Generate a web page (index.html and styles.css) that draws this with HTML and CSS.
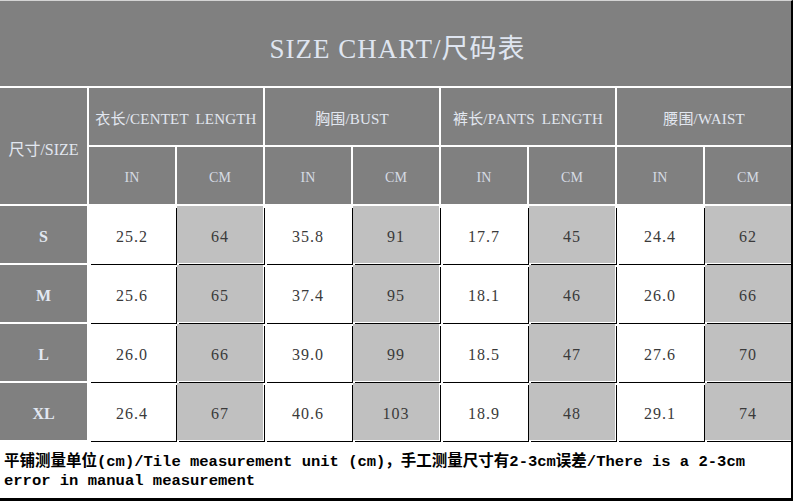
FILE: index.html
```html
<!DOCTYPE html>
<html lang="zh">
<head>
<meta charset="utf-8">
<title>Size Chart</title>
<link rel="stylesheet" href="styles.css">
</head>
<body>
<div class="sheet">
  <div class="title">SIZE CHART/尺码表</div>

  <div class="hd size-hd">尺寸/SIZE</div>
  <div class="hd group">衣长/CENTET LENGTH</div>
  <div class="hd group">胸围/BUST</div>
  <div class="hd group">裤长/PANTS LENGTH</div>
  <div class="hd group">腰围/WAIST</div>

  <div class="hd unit">IN</div><div class="hd unit">CM</div>
  <div class="hd unit">IN</div><div class="hd unit">CM</div>
  <div class="hd unit">IN</div><div class="hd unit">CM</div>
  <div class="hd unit">IN</div><div class="hd unit">CM</div>

  <div class="size">S</div>
  <div class="val in">25.2</div><div class="val cm">64</div>
  <div class="val in">35.8</div><div class="val cm">91</div>
  <div class="val in">17.7</div><div class="val cm">45</div>
  <div class="val in">24.4</div><div class="val cm">62</div>

  <div class="size">M</div>
  <div class="val in">25.6</div><div class="val cm">65</div>
  <div class="val in">37.4</div><div class="val cm">95</div>
  <div class="val in">18.1</div><div class="val cm">46</div>
  <div class="val in">26.0</div><div class="val cm">66</div>

  <div class="size">L</div>
  <div class="val in">26.0</div><div class="val cm">66</div>
  <div class="val in">39.0</div><div class="val cm">99</div>
  <div class="val in">18.5</div><div class="val cm">47</div>
  <div class="val in">27.6</div><div class="val cm">70</div>

  <div class="size">XL</div>
  <div class="val in">26.4</div><div class="val cm">67</div>
  <div class="val in">40.6</div><div class="val cm">103</div>
  <div class="val in">18.9</div><div class="val cm">48</div>
  <div class="val in">29.1</div><div class="val cm">74</div>

  <div class="note">平铺测量单位(cm)/Tile measurement unit (cm)，手工测量尺寸有2-3cm误差/There is a 2-3cm error in manual measurement</div>
</div>
</body>
</html>
```

FILE: styles.css
```css
html, body {
  margin: 0;
  padding: 0;
  background: #fff;
}

.sheet {
  width: 793px;
  height: 501px;
  box-sizing: border-box;
  border-top: 1px solid #d4d4d4;
  border-right: 2px solid #000;
  border-bottom: 3px solid #000;
  background: #fff;
  display: grid;
  grid-template-columns: 87px repeat(8, 86px);
  grid-template-rows: 85px repeat(6, 57px) 56px;
  gap: 2px;
  overflow: hidden;
  font-family: "Liberation Serif", "Noto Sans CJK SC", serif;
}

.title {
  grid-column: 1 / -1;
  background: #808080;
  color: #dfe5f0;
  font-size: 27px;
  letter-spacing: 1px;
  display: flex;
  align-items: center;
  justify-content: center;
  padding-top: 5px;
  padding-left: 4px;
}

.hd {
  background: #808080;
  color: #e2e7f0;
  display: flex;
  align-items: center;
  justify-content: center;
  white-space: nowrap;
}

.size-hd {
  grid-row: span 2;
  font-size: 16px;
  padding-top: 3px;
}

.group {
  grid-column: span 2;
  font-size: 15px;
  letter-spacing: 0.2px;
  word-spacing: 3px;
  padding-top: 2px;
}

.unit {
  font-size: 14px;
  color: #d6dbe4;
  padding-top: 5px;
}

.size {
  background: #808080;
  color: #e2e8f2;
  font-size: 16px;
  font-weight: bold;
  display: flex;
  align-items: center;
  justify-content: center;
  padding-top: 5px;
}

.val {
  display: flex;
  align-items: center;
  justify-content: center;
  padding-top: 5px;
  font-size: 16px;
  letter-spacing: 1px;
  color: #3a3a3a;
  box-shadow: 1px 1px 0 #fff, 2px 2px 0 #000;
}

.val.in {
  background: #fff;
}

.val.cm {
  background: #c0c0c0;
}

.note {
  grid-column: 1 / -1;
  background: #fff;
  color: #000;
  font-family: "Liberation Mono", "Noto Sans CJK SC", monospace;
  font-size: 15.5px;
  font-weight: bold;
  line-height: 19px;
  padding: 11px 20px 0 4px;
}
```
